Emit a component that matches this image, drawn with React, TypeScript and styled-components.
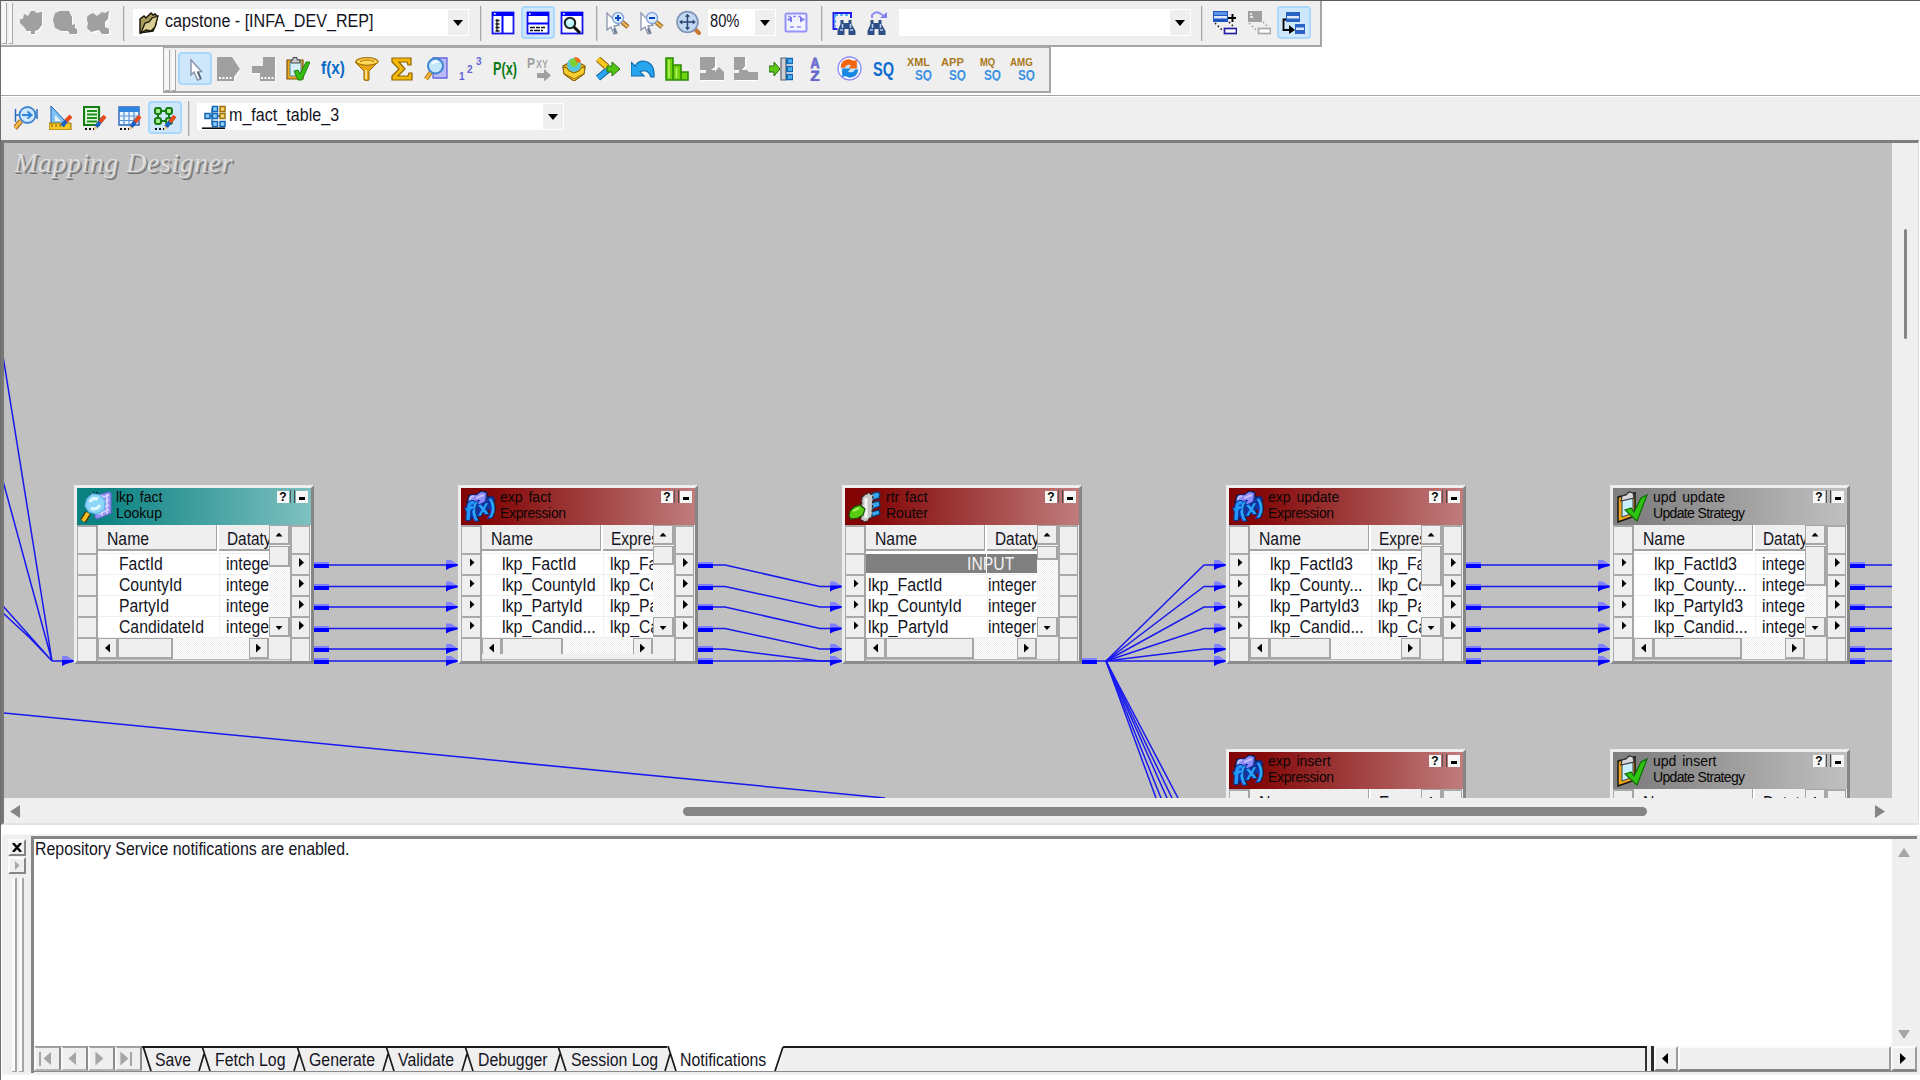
import React from 'react';
import styled, { createGlobalStyle, css } from 'styled-components';

const Global = createGlobalStyle`
  * { box-sizing: border-box; }
  html, body { margin: 0; padding: 0; background: #fff; overflow: hidden; }
  svg { display: block; flex: none; }
`;

const face = '#efefef';
const shade = '#a6a6a6';

const Screen = styled.div`
  width: 1920px;
  height: 1080px;
  display: flex;
  flex-direction: column;
  background: #fff;
  border-left: 1px solid #6e6e6e;
  border-top: 1px solid #5c5c5c;
  font-family: 'Liberation Sans', Arial, sans-serif;
  color: #14141e;
  overflow: hidden;
`;

const Label = styled.span<{ size?: number; squeeze?: number }>`
  display: inline-block;
  font-size: ${p => p.size ?? 17.5}px;
  line-height: 20px;
  white-space: pre;
  transform: scaleX(${p => p.squeeze ?? 0.9});
  transform-origin: 0 50%;
`;

/* ---------- toolbars ---------- */

const StandardBar = styled.div`
  display: flex;
  align-items: flex-start;
  width: 1321px;
  height: 46px;
  background: ${face};
  border-right: 2px solid ${shade};
  border-bottom: 2px solid ${shade};
`;

const BarRow = styled.div`
  display: flex;
  height: 48px;
  padding-left: 162px;
`;

const TransformBar = styled.div`
  display: flex;
  align-items: flex-start;
  width: 888px;
  height: 46px;
  padding-left: 1px;
  background: ${face};
  border: 2px solid ${shade};
  border-left-width: 1px;
  border-top-width: 1px;
`;

const DesignerBar = styled.div`
  display: flex;
  align-items: flex-start;
  height: 45px;
  padding-left: 8px;
  background: ${face};
  border-top: 1px solid ${shade};
  box-shadow: inset 0 1px 0 #fff;
`;

const Grip = styled.div<{ gap: number }>`
  display: flex;
  gap: 2px;
  width: 11px;
  height: 41px;
  margin: 2px 0 0 ${p => p.gap}px;
  &::before,
  &::after {
    content: '';
    width: 4px;
    background: #f7f7f7;
    border-right: 1px solid ${shade};
    border-bottom: 1px solid ${shade};
  }
`;

const Tool = styled.div<{ gap?: number; w?: number; top?: number; on?: boolean }>`
  display: flex;
  align-items: center;
  justify-content: center;
  flex: none;
  width: ${p => p.w ?? 34}px;
  height: 33px;
  margin: ${p => p.top ?? 5}px 0 0 ${p => p.gap ?? 0}px;
  border: 2px solid transparent;
  border-radius: 4px;
  ${p =>
    p.on &&
    css`
      background: #cfe7fb;
      border-color: #a9d8fb;
    `}
`;

const Rule = styled.div<{ gap: number; top?: number }>`
  flex: none;
  width: 2px;
  height: 35px;
  margin: ${p => p.top ?? 5}px 0 0 ${p => p.gap}px;
  background: linear-gradient(90deg, ${shade} 70%, #dcdcdc 70%);
`;

const Combo = styled.div<{ gap: number; w: number; top?: number }>`
  display: flex;
  align-items: center;
  flex: none;
  width: ${p => p.w}px;
  height: 27px;
  margin: ${p => p.top ?? 8}px 0 0 ${p => p.gap}px;
  background: #fff;
`;

const ComboIcon = styled.div<{ gap: number }>`
  margin-left: ${p => p.gap}px;
`;

const ComboText = styled.div<{ pad: number }>`
  flex: 1;
  min-width: 0;
  height: 20px;
  margin-top: -3px;
  padding-left: ${p => p.pad}px;
`;

const ComboButton = styled.div`
  display: flex;
  align-items: center;
  justify-content: center;
  width: 20px;
  height: 25px;
  margin-right: 1px;
  background: ${face};
  &::after {
    content: '';
    border: 5.5px solid transparent;
    border-top: 6px solid #000;
    border-bottom: 0;
  }
`;

/* ---------- glyphs ---------- */

const Ic = ({ children, s = 24 }: { children: React.ReactNode; s?: number }) => (
  <svg width={s} height={s} viewBox="0 0 24 24">
    {children}
  </svg>
);

const BITMAP = "'Liberation Sans', Arial, sans-serif";

const Blob = ({ d }: { d: string }) => (
  <Ic>
    <path d={d} fill="#fff" transform="translate(1.3 1.3)" />
    <path d={d} fill="#a0a0a0" />
  </Ic>
);

const Folder = () => (
  <svg width="22" height="24" viewBox="0 0 22 24">
    <path d="M2 22V8l4-3 2 2 5-5 2 2 2-1 2 2-1 8-3 7z" fill="#a89c5c" stroke="#1a1708" strokeWidth="1.500" />
    <path d="M3 22 7 12l4-1 3-4 6-2-3 11-4 4-5-1z" fill="#d9cf94" stroke="#1a1708" strokeWidth="1.300" />
  </svg>
);

const WinIcon = ({ kind }: { kind: 'nav' | 'out' | 'find' }) => (
  <Ic>
    <rect x="1.5" y="1.5" width="21" height="21" fill="#fff" stroke="#1414f0" strokeWidth="1.8" />
    <rect x="1" y="1" width="22" height="4" fill="#0000ff" />
    <rect x="3" y="2" width="1.6" height="1.6" fill="#fff" />
    {kind === 'nav' && (
      <>
        <path d="M11.5 5v17" stroke="#0000ff" strokeWidth="2" />
        <path d="M6 8v12M4.5 9.500h4M4.500 13h4M4.500 16.500h4M4.500 20h4" stroke="#111" strokeWidth="1.3" />
      </>
    )}
    {kind === 'out' && (
      <>
        <path d="M2 12.500h20" stroke="#0000ff" strokeWidth="2" />
        <path d="M4 16.500h5m1 0h4m1 0h4M4 19.500h3m1 0h6m1 0h2" stroke="#111" strokeWidth="1.5" />
      </>
    )}
    {kind === 'find' && (
      <>
        <circle cx="10" cy="12" r="5.2" fill="#b8f6fa" stroke="#222" strokeWidth="2" />
        <path d="M8 12l3-3" stroke="#fff" strokeWidth="1.500" />
        <path d="m14 16 6 6" stroke="#111" strokeWidth="3" />
      </>
    )}
  </Ic>
);

const ZoomCursor = ({ plus }: { plus?: boolean }) => (
  <Ic>
    <path d="m1 2 0 17 4-3 3 7 3-1-3-7 5-1z" fill="#fff" stroke="#8995ad" strokeWidth="1.3" />
    <path d="m9 17 2 5-2 1-2-5z" fill="#6d7b95" />
    <path d="m16 11 6 5" stroke="#8a5b18" strokeWidth="4.500" />
    <path d="m16 11 6 5" stroke="#e9b254" strokeWidth="2.600" />
    <circle cx="12" cy="7" r="5.500" fill="#dcebfd" stroke="#86a5d8" strokeWidth="1.400" />
    <path d={plus ? 'M9 7h6M12 4v6' : 'M9 7h6'} stroke="#0a49c4" strokeWidth="2" />
  </Ic>
);

const FitZoom = () => (
  <Ic s={25}>
    <path d="m18 18 4 4" stroke="#c8782e" strokeWidth="4" strokeLinecap="round" />
    <circle cx="11" cy="11.500" r="10" fill="#c3d8f3" stroke="#8496b8" strokeWidth="1.700" />
    <path d="M11 5v13M5 11.500h12" stroke="#2b4672" strokeWidth="1.500" />
    <path d="m11 3.500 2.500 3h-5zM11 19.500l2.500-3h-5zM3 11.500l3-2.500v5zM19 11.500l-3-2.500v5z" fill="#2b4672" />
  </Ic>
);

const Extent = () => (
  <Ic>
    <rect x="1.500" y="2.500" width="21" height="18" rx="1.500" fill="#f3f3ff" stroke="#9494f8" strokeWidth="2" />
    <path d="M4 5.500h3m2 0h3m2 0h3M6 16h4m3 0h4" stroke="#8d8df5" strokeWidth="1.600" />
    <path d="M7 6v5M3.500 8.500H8M17 6v5M16 8.500h4.500" stroke="#7474ee" strokeWidth="1.800" />
  </Ic>
);

const Binocs = () => (
  <>
    <path d="M6 9h3v3h5V9h3v4l4 7v4h-7v-6h-4v6H3v-4l3-7z" fill="#2d4f85" />
    <path d="M5.500 19h3M15.500 19h3M8 13v4M16 13v4" stroke="#b8cdee" strokeWidth="1.600" />
  </>
);

const FindMap = () => (
  <Ic>
    <path d="M1.500 1v17h4M1.500 2H19v5" fill="none" stroke="#2020ec" strokeWidth="2" />
    <path d="M3 4h14M3 4v12" stroke="#2ca0f4" strokeWidth="1.500" strokeDasharray="3 2" />
    <g transform="translate(2.500 0)">
      <Binocs />
    </g>
  </Ic>
);

const FindNext = () => (
  <Ic>
    <path d="M6 7V4q4-5 9-1l3 2" fill="none" stroke="#8c8cf4" strokeWidth="2" />
    <path d="M21 1v6h-7z" fill="#8080f2" />
    <g transform="translate(-1.500 0)">
      <Binocs />
    </g>
  </Ic>
);

const LinkBoxes = ({ gray }: { gray?: boolean }) => (
  <Ic>
    {gray ? (
      <>
        <path d="M1 0h14v11H1z" fill="#a0a0a0" />
        <path d="M3 3h2M3 6h3" stroke="#fff" strokeWidth="1.500" />
      </>
    ) : (
      <>
        <path d="M0 0h15v11H0z" fill="#1f55bc" />
        <path d="M1 1h13v3H1z" fill="#5f93ea" />
        <path d="M1 5h13v2.500H1z" fill="#dfe8fa" />
        <path d="M15 7h8M19.500 3v8" stroke="#000" strokeWidth="2" />
      </>
    )}
    <path d="M2 12l8 8M16 11l5 5" stroke={gray ? '#a8a8a8' : '#222'} strokeWidth="1.700" strokeDasharray="1.500 2.500" />
    <rect x="11.500" y="17.500" width="12" height="5" fill="#fff" stroke={gray ? '#a8a8a8' : '#2020a0'} strokeWidth="1.700" />
  </Ic>
);

const Cascade = () => (
  <Ic>
    <path d="M4 1h14v10H4z" fill="#2a62c4" />
    <path d="M5 5h12v2.500H5z" fill="#dbe6fa" />
    <path d="M13 13h10v10H13z" fill="#2a62c4" />
    <path d="M14 16.500h8v2.500h-8z" fill="#dbe6fa" />
    <path d="M4 8.500H1.500V19H8" fill="none" stroke="#000" strokeWidth="1.800" />
    <path d="m7 14 6 5-6 4z" fill="#000" />
  </Ic>
);

const Pointer = () => (
  <Ic>
    <path d="m8 3 0 15 3-3 3.500 8 3-1-3-7 4-.500z" fill="#fff" stroke="#8a95a8" strokeWidth="1.500" />
    <path d="m15 15 3 7" stroke="#5c6678" strokeWidth="1.800" />
  </Ic>
);

const Teeth = ({ left }: { left?: boolean }) => (
  <Ic>
    <g>
      <path d={left ? 'M11 0h12v24H8v-8H0V9h11z' : 'M0 0h15l8 12-6 8v4H0z'} fill="#fff" transform="translate(1 1)" />
      <path d={left ? 'M11 0h12v24H8v-8H0V9h11z' : 'M0 0h15l8 12-6 8v4H0z'} fill="#a0a0a0" />
      <path d={left ? 'M9 21h13' : 'M2 21h14'} stroke="#fff" strokeWidth="2" strokeDasharray="2 1.500" />
    </g>
  </Ic>
);

const Clip = () => (
  <Ic>
    <path d="M1 3h16v19H1z" fill="#f0a818" stroke="#7c5310" strokeWidth="1.200" />
    <path d="M4 5h11v14H4z" fill="#d4f0fc" stroke="#4c8b9a" strokeWidth="1" />
    <path d="M5 6V3h2V.500h4V3h3v3z" fill="#c9cdd4" stroke="#444" strokeWidth="1" />
    <path d="m8 14 4-1 2 4 6-12h4l-8 18h-4z" fill="#35bd10" stroke="#1a7606" strokeWidth=".9" />
  </Ic>
);

const Word = ({ t, fill, size = 18, w = 24, y = 18, x = 0 }: { t: string; fill: string; size?: number; w?: number; y?: number; x?: number }) => (
  <text x={x} y={y} fontFamily={BITMAP} fontWeight="700" fontSize={size} fill={fill} textLength={w} lengthAdjust="spacingAndGlyphs">
    {t}
  </text>
);

const Funnel = () => (
  <Ic>
    <path d="M0 5 9 14v9q3 1 5 0v-9l9-9z" fill="#eaa60c" stroke="#8f6408" strokeWidth="1" />
    <ellipse cx="12" cy="4.500" rx="11" ry="3.800" fill="#ffd95c" stroke="#a8770c" strokeWidth="1.200" />
    <path d="M5 4.500q7-3 14 0" stroke="#c78b0c" strokeWidth="1.600" fill="none" />
    <path d="M11 13v9" stroke="#fff0a8" strokeWidth="1.600" />
  </Ic>
);

const Sigma = () => (
  <Ic>
    <path d="M2 1h19v7h-3l-1-3H9l6 7-7 7h10l1-3h3v7H2v-4l7-7-7-7z" fill="#f4b806" stroke="#8f6408" strokeWidth="1.200" />
  </Ic>
);

const Glass = () => (
  <Ic>
    <path d="M9 1h14v20H9z" fill="#b9b9f8" stroke="#6464dc" strokeWidth="1.300" />
    <path d="m7 15-5 7" stroke="#a86a14" strokeWidth="4.500" />
    <path d="m7 15-5 7" stroke="#f4bb38" strokeWidth="2.500" />
    <circle cx="11.500" cy="9" r="7.500" fill="#c4e6fb" stroke="#3e84d0" strokeWidth="2" />
    <path d="M8 7q2-3 6-2" stroke="#fff" strokeWidth="2" fill="none" />
  </Ic>
);

const Seq = () => (
  <Ic>
    <g fontFamily={BITMAP} fontWeight="700" fill="#6464d4">
      <text x="0" y="23" fontSize="10">1</text>
      <text x="8" y="16" fontSize="10">2</text>
      <text x="17" y="8" fontSize="10">3</text>
    </g>
  </Ic>
);

const Pxy = () => (
  <Ic>
    <Word t="P" fill="#a0a0a0" size={15} w={8} y={11} />
    <Word t="XY" fill="#a8a8a8" size={11} w={12} y={11} x={9} />
    <path d="M10 16h7v-4l7 6.500-7 6V21h-7z" fill="#a0a0a0" />
  </Ic>
);

const Crate = () => (
  <Ic>
    <path d="M1 9 12 3l11 6-1 8-10 7-10-7z" fill="#e4ad0e" stroke="#84600a" strokeWidth="1.200" />
    <circle cx="12" cy="8" r="7" fill="#58c8e0" />
    <path d="M7 4q5-5 10 0l-2 5-5 1z" fill="#7cd232" />
    <path d="M12 0q6 0 7 5l-4 1z" fill="#f26c20" />
    <path d="M1 10l4 1 2 3 5 2 5-2 2-3 4-1-1 7-10 7-10-7z" fill="#f7cf30" stroke="#84600a" strokeWidth="1" />
    <path d="m3 17 9 5 9-5" fill="none" stroke="#9c6f06" />
  </Ic>
);

const Merge = () => (
  <Ic>
    <path d="m2 21 11-9" stroke="#10649e" strokeWidth="6.500" />
    <path d="m2 21 11-9" stroke="#2ba4ee" strokeWidth="4.500" />
    <path d="m2 2 9 8" stroke="#93690a" strokeWidth="6.500" />
    <path d="m2 2 9 8" stroke="#f9c721" strokeWidth="4.500" />
    <path d="M11 9h5V5l8 7-8 7v-4h-5z" fill="#52c414" stroke="#2a7506" />
  </Ic>
);

const Undo = () => (
  <Ic>
    <path d="M0 5v14h13l-4-4q8-4 11 5h3Q24 5 12 4 7 4 4 9z" fill="#28a4ee" stroke="#0c6ab0" strokeWidth="1.200" />
  </Ic>
);

const Bars = () => (
  <Ic>
    <path d="M1 1h7v22H1zM8 8h8v15H8zM16 15h7v8h-7z" fill="#6fd40c" stroke="#2b8c04" strokeWidth="1.600" />
    <path d="M4 3v18M11.500 11v10" stroke="#b8f26a" strokeWidth="1.500" />
  </Ic>
);

const RouterGlyph = () => (
  <Ic>
    <path d="M0 9h5V5l6 7-6 7v-4H0z" fill="#5cc814" stroke="#26700a" />
    <path d="M12 1h5v22h-5z" fill="#ccd0d4" stroke="#5c6468" strokeWidth="1.200" />
    <path d="M17 4h7M17 12h7M17 20h7" stroke="#1568b4" strokeWidth="6.500" />
    <path d="M19 4h4M19 12h4M19 20h4" stroke="#46b0f4" strokeWidth="3.500" />
  </Ic>
);

const Sorter = () => (
  <Ic>
    <g stroke="#6c6cd0" strokeWidth=".8">
      <Word t="A" fill="#7070d4" size={14} w={9} y={10.500} x={7.500} />
      <Word t="Z" fill="#5c5cc4" size={15} w={9} y={23.500} x={7.500} />
    </g>
  </Ic>
);

const Globe = () => (
  <Ic s={25}>
    <circle cx="12" cy="12" r="11" fill="#fff" stroke="#8a8cf4" strokeWidth="1.300" />
    <circle cx="12" cy="12" r="8.800" fill="#c8e2fa" />
    <path d="M3.500 11Q4 3 12 3.200l4 1.500 3-1.200v8.500h-8l2.500-3q-4-2-6 2.500z" fill="#f4650c" />
    <path d="M20.500 13Q19.500 20.800 12 20.800l-4-1.500-3 1.200V12h8l-2.500 3q5 2 7-2z" fill="#1888e4" />
  </Ic>
);

const Sq = ({ top }: { top: string }) => (
  <svg width="26" height="24" viewBox="-1 0 26 24">
    <Word t={top} fill="#a8781c" size={10.500} w={top.length * 7.600} y={8.500} x={top.length === 2 ? 4 : 0} />
    <Word t="SQ" fill="#3a90e4" size={15} w={17} y={23} x={8} />
  </svg>
);

const Pencil = () => (
  <>
    <path d="m13 21 7-9" stroke="#1a60c0" strokeWidth="4" />
    <path d="m17 16 5-6" stroke="#e84a1c" strokeWidth="4" />
    <path d="m11 24 1-4 3 2z" fill="#f0c070" />
    <path d="M2 23h9" stroke="#111" strokeWidth="1.800" strokeDasharray="2 2" />
  </>
);

const Source = () => (
  <Ic>
    <path d="M1.500 3v13M2 9h4M23 3v10" stroke="#2b6cc0" strokeWidth="1.500" />
    <path d="m7 15-6 7" stroke="#9c5d12" strokeWidth="5" />
    <path d="m7 15-6 7" stroke="#f4b850" strokeWidth="3" />
    <circle cx="13.500" cy="9" r="8" fill="#cfe9fb" stroke="#3e84d0" strokeWidth="1.800" />
    <path d="M8 9h8M13.500 5.500 17.500 9l-4 3.500" fill="none" stroke="#2f86dc" strokeWidth="2" />
  </Ic>
);

const Target = () => (
  <Ic>
    <path d="M2 0v18h17z" fill="#7cc4f8" stroke="#2060b4" />
    <path d="M6 9v6h6z" fill="#efefef" />
    <path d="M0 17h22v7H0z" fill="#f6c828" stroke="#94700c" />
    <path d="M3 18v3m4-3v3m4-3v3m4-3v3" stroke="#7a5a08" />
    <path d="m13 20 5-6" stroke="#1a60c0" strokeWidth="4" />
    <path d="m17 15 5-5" stroke="#e84a1c" strokeWidth="4" />
  </Ic>
);

const Sheet = () => (
  <Ic>
    <path d="M1 1h15v18H1z" fill="#e4f8e0" stroke="#167c14" strokeWidth="2.200" />
    <path d="M4 5h10M4 8.500h10M4 12h10M4 15.500h10" stroke="#1d8f1a" strokeWidth="2" />
    <Pencil />
  </Ic>
);

const Grid = () => (
  <Ic>
    <path d="M1 1h20v18H1z" fill="#e8f4ff" stroke="#2b62b8" strokeWidth="1.400" />
    <path d="M1 1h20v5H1z" fill="#2f84e0" />
    <path d="M1 10h20M1 14.500h20M6 6v13M11 6v13M16 6v13" stroke="#5b94d6" strokeWidth="1.200" />
    <Pencil />
  </Ic>
);

const MapGlyph = () => (
  <Ic>
    <path d="M5 5h12M5 15h12M5 5v10M16 5v10" stroke="#167c14" strokeWidth="2" />
    {[[5, 5], [16, 5], [5, 15], [16, 15]].map(([x, y]) => (
      <rect key={`${x}-${y}`} x={x - 3} y={y - 3} width="6" height="6" rx="2" fill="#a8ee90" stroke="#167c14" strokeWidth="2" />
    ))}
    <Pencil />
  </Ic>
);

const MapFile = () => (
  <Ic>
    <path d="M6 11h4M13 4H10v15h3M16 11h2" fill="none" stroke="#1464b4" strokeWidth="1.300" />
    <path d="M3 8.500h5v5H3zM10.500 1.500h5v5h-5zM10.500 8.500h5v5h-5zM10.500 16.500h5v5h-5zM18 16.500h5v5h-5z" fill="#8cd0fa" stroke="#1464b4" strokeWidth="1.500" />
    <path d="M18 1.500h5v5h-5zM18 8.500h5v5h-5z" fill="#f8d468" stroke="#9a700c" strokeWidth="1.500" />
    <path d="M0 23.200h23" stroke="#000" strokeWidth="1.500" />
  </Ic>
);

const CloseMark = () => (
  <svg width="10" height="9" viewBox="0 0 10 9">
    <path d="m1 0 8 9M9 0 1 9" stroke="#000" strokeWidth="2.400" />
  </svg>
);

/* ---------- mapping canvas ---------- */

const CanvasFrame = styled.div`
  display: grid;
  grid-template-columns: 1888px 1fr;
  grid-template-rows: 655px 1fr;
  width: 1918px;
  height: 685px;
  border-left: 3px solid #777;
  border-top: 3px solid #7d7d7d;
  border-right: 1px solid #dedede;
  border-bottom: 2px solid #e3e3e3;
  background: ${face};
`;

const Canvas = styled.div`
  position: relative;
  overflow: hidden;
  background: #c0c0c0;
`;

const Wires = styled.svg`
  position: absolute;
  inset: 0;
`;

const CanvasTitle = styled.div`
  padding: 4px 0 0 10px;
  font: italic 400 28px/32px 'Liberation Serif', 'Times New Roman', serif;
  letter-spacing: 0.5px;
  color: #dedede;
  text-shadow: 1px 1px 0 #a0a0a0, 2px 2px 0 #707070;
  white-space: nowrap;
`;

const Vertical = styled.div`
  padding: 86px 0 0 12px;
  &::after {
    content: '';
    display: block;
    width: 3px;
    height: 110px;
    border-radius: 2px;
    background: #858585;
  }
`;

const Horizontal = styled.div`
  display: flex;
  align-items: center;
  padding: 2px 7px 0 6px;
`;

const Thumb = styled.div`
  width: 964px;
  height: 9px;
  margin: 0 228px 0 663px;
  border-radius: 5px;
  background: #858585;
`;

const Tri = styled.i<{ dir: 'l' | 'r' | 'u' | 'd'; a: number; b: number; tone?: string }>`
  flex: none;
  width: ${p => (p.dir === 'l' || p.dir === 'r' ? p.a : p.b * 2)}px;
  height: ${p => (p.dir === 'l' || p.dir === 'r' ? p.b * 2 : p.a)}px;
  background: ${p => p.tone ?? '#000'};
  clip-path: polygon(
    ${p =>
      ({
        l: '0 50%, 100% 0, 100% 100%',
        r: '0 0, 100% 50%, 0 100%',
        u: '50% 0, 100% 100%, 0 100%',
        d: '0 0, 100% 0, 50% 100%',
      })[p.dir]}
  );
`;

const NodeBox = styled.div<{ x: number; y: number }>`
  position: absolute;
  left: ${p => p.x - 4}px;
  top: ${p => p.y - 143}px;
  width: 240px;
  height: 179px;
  border: 3px solid;
  border-color: #ededed #868686 #8c8c8c #ededed;
  background: ${face};
`;

const NodeHead = styled.div<{ from: string; to: string }>`
  display: flex;
  height: 37px;
  padding: 2px 3px 0 3px;
  background: linear-gradient(90deg, ${p => p.from} 10%, ${p => p.to});
`;

const NodeTitle = styled.div`
  flex: 1;
  padding: 0 0 0 4px;
  font-size: 14px;
  line-height: 16.5px;
  white-space: pre;
  color: #0a0505;
`;

const TitleLine = styled.div<{ w: number }>`
  height: 16px;
  letter-spacing: ${p => p.w}px;
  word-spacing: 2px;
  margin-top: -1px;
  & + & {
    margin-top: 0;
    word-spacing: 0;
  }
`;

const HeadButton = styled.div`
  display: flex;
  align-items: center;
  justify-content: center;
  width: 12px;
  height: 12px;
  margin-top: 1px;
  background: #f6f6f6;
  font: 700 12px/12px 'Liberation Sans', sans-serif;
  color: #000;
`;

const HeadSplit = styled.div`
  width: 6px;
  height: 13px;
  margin: 0 0 0 1px;
  border-left: 1px solid #555;
  &::after {
    content: '';
    display: block;
    width: 1px;
    height: 13px;
    margin-left: 3px;
    background: #444;
  }
`;

const Minus = styled.i`
  width: 6px;
  height: 3px;
  margin-top: 3px;
  background: #000;
`;

const NodeBody = styled.div`
  display: grid;
  grid-template-columns: 21px 192px 21px;
  height: 136px;
`;

const Ports = styled.div<{ right?: boolean }>`
  display: grid;
  grid-template-rows: 28px repeat(4, 21px) 24px;
  margin-right: ${p => (p.right ? 1 : 0)}px;
  border-left: ${p => (p.right ? 2 : 1)}px solid #a9a9a9;
  border-right: ${p => (p.right ? 1 : 2)}px solid #a4a4a4;
`;

const Port = styled.div`
  display: flex;
  align-items: center;
  justify-content: center;
  padding: 0 0 4px 2px;
  border-top: 2px solid #a9a9a9;
`;

const Middle = styled.div`
  display: grid;
  grid-template-columns: 171px 21px;
  grid-template-rows: 112px 22px 2px;
  overflow: hidden;
`;

const List = styled.div`
  overflow: hidden;
  background: #fff;
`;

const HeadRow = styled.div`
  display: grid;
  grid-template-columns: 119px 52px;
  gap: 2px;
  height: 24px;
  margin-bottom: 4px;
`;

const HeadCell = styled.div`
  padding: 4px 0 0 8px;
  background: ${face};
  border-bottom: 2px solid #a4a4a4;
  &:first-child {
    padding-left: 9px;
    border-right: 1px solid #a4a4a4;
  }
`;

const Row = styled.div`
  display: grid;
  grid-template-columns: 121px 50px;
  height: 21px;
  border-top: 1px solid #efefef;
`;

const Cell = styled.div<{ pad: number }>`
  height: 20px;
  padding-left: ${p => p.pad}px;
  border-left: 1px solid #f0f0f0;
  &:first-child {
    border-left: 0;
  }
`;

const GroupRow = styled.div`
  height: 21px;
  padding-left: 101px;
  border-top: 1px solid #fff;
  border-bottom: 1px solid #fff;
  background: linear-gradient(90deg, #808080 120px, #fff 120px, #fff 121px, #808080 121px);
  color: #f2f2f2;
`;

const dither = css`
  background: repeating-conic-gradient(#fff 0 25%, #ededed 0 50%) 0 0 / 2px 2px;
`;

const VBar = styled.div`
  display: flex;
  flex-direction: column;
  justify-content: space-between;
  ${dither}
`;

const Push = styled.div<{ w: number; h: number; gap?: number; end?: boolean; drop?: number }>`
  display: flex;
  align-items: center;
  justify-content: center;
  flex: none;
  width: ${p => p.w}px;
  height: ${p => p.h}px;
  margin-top: ${p => p.gap ?? 0}px;
  padding-top: ${p => p.drop ?? 0}px;
  ${p => p.end && 'margin-left: auto;'}
  background: ${face};
  border: 2px solid #a6a6a6;
  border-width: 1px 2px 2px 1px;
`;

const HBar = styled.div<{ cut?: boolean }>`
  display: flex;
  height: ${p => (p.cut ? 16 : 21)}px;
  margin-top: 1px;
  overflow: hidden;
  ${dither}
`;

const Corner = styled.div`
  background: ${face};
`;

const Foot = styled.div`
  grid-column: 1 / -1;
  background: #dedee2;
  border-top: 1px solid #b8b8bc;
`;

type NodeSpec = {
  x: number;
  y: number;
  name: string;
  kind: 'Lookup' | 'Expression' | 'Router' | 'Update Strategy';
  second: string;
  rows: [string, string][];
  vThumb: number;
  hThumb: number;
  ins: number[];
  outs: number[];
};

const palette = {
  Lookup: ['#0b8282', '#7fc0c0'],
  Expression: ['#820404', '#c07c7c'],
  Router: ['#820404', '#c07c7c'],
  'Update Strategy': ['#808080', '#c0c0c0'],
};

const keys3: [string, string][] = [
  ['lkp_FactId3', ''],
  ['lkp_County...', ''],
  ['lkp_PartyId3', ''],
  ['lkp_Candid...', ''],
];
const exprs = ['lkp_FactId', 'lkp_County', 'lkp_PartyId', 'lkp_Candid'];

const withSecond = (rows: [string, string][], values: string[]): [string, string][] =>
  rows.map(([a], i) => [a, values[i]]);
const ints = ['integer', 'integer', 'integer', 'integer'];
const all = [1, 2, 3, 4];

const nodes: NodeSpec[] = [
  { x: 74, y: 485, name: 'lkp fact', kind: 'Lookup', second: 'Datatype', vThumb: 21, hThumb: 55, ins: [], outs: all,
    rows: [['FactId', 'integer'], ['CountyId', 'integer'], ['PartyId', 'integer'], ['CandidateId', 'integer']] },
  { x: 458, y: 485, name: 'exp fact', kind: 'Expression', second: 'Expression', vThumb: 19, hThumb: 61, ins: all, outs: all,
    rows: withSecond([['lkp_FactId', ''], ['lkp_CountyId', ''], ['lkp_PartyId', ''], ['lkp_Candid...', '']], exprs) },
  { x: 842, y: 485, name: 'rtr fact', kind: 'Router', second: 'Datatype', vThumb: 14, hThumb: 88, ins: [2, 3, 4], outs: [],
    rows: [['lkp_FactId', 'integer'], ['lkp_CountyId', 'integer'], ['lkp_PartyId', 'integer']] },
  { x: 1226, y: 485, name: 'exp update', kind: 'Expression', second: 'Expression', vThumb: 40, hThumb: 61, ins: all, outs: all,
    rows: withSecond(keys3, exprs) },
  { x: 1610, y: 485, name: 'upd update', kind: 'Update Strategy', second: 'Datatype', vThumb: 40, hThumb: 88, ins: all, outs: all,
    rows: withSecond(keys3, ints) },
  { x: 1226, y: 749, name: 'exp insert', kind: 'Expression', second: 'Expression', vThumb: 40, hThumb: 61, ins: all, outs: all,
    rows: withSecond(keys3, exprs) },
  { x: 1610, y: 749, name: 'upd insert', kind: 'Update Strategy', second: 'Datatype', vThumb: 40, hThumb: 88, ins: all, outs: all,
    rows: withSecond(keys3, ints) },
];

const NodeIcon = ({ kind }: { kind: NodeSpec['kind'] }) => {
  if (kind === 'Lookup')
    return (
      <svg width="32" height="33" viewBox="0 0 32 33">
        <path d="m10 5 4-3 5 1v3" fill="none" stroke="#0a3c44" strokeWidth="1.600" strokeDasharray="2 1.500" />
        <path d="m15 6 14-4 2 1v20l-14 6-2-2z" fill="#9490f0" stroke="#6a68d0" strokeWidth="1" />
        <path d="m18 9 11-4M18 14l11-4M18 19l11-4M18 24l11-4M22 5v21M27 4v20" stroke="#d8d6ff" strokeWidth="1.600" />
        <path d="m8 23-5 8" stroke="#4a3206" strokeWidth="6.500" />
        <path d="m8 23-5 8" stroke="#f7be22" strokeWidth="4" />
        <path d="m7 9 5-5 8 1 5 6-1 9-7 4-8-2-4-6z" fill="#8ed6f8" stroke="#62b4e8" strokeWidth="1.200" />
        <path d="M10 12q2-5 8-3M11 18q5 3 9-3" stroke="#e4f8ff" strokeWidth="3" fill="none" />
      </svg>
    );
  if (kind === 'Expression')
    return (
      <svg width="32" height="33" viewBox="0 0 32 33">
        <path d="m3 12 2-7 8-1 4-3 6 1v5l6-1 2 4-4 9-14 8-8 2z" fill="#16389c" stroke="#081640" strokeWidth="1" strokeDasharray="3 1.500" />
        <path d="m4 12 2-6 7-1 4-3 5 1-1 8-5 3-11 4z" fill="#8c8af8" />
        <path d="M6 10q0-4 4-4M12 8l8-3" stroke="#c0beff" strokeWidth="2" fill="none" />
        <text x="7" y="25" fontFamily={BITMAP} fontStyle="italic" fontWeight="700" fontSize="20" fill="#2aa6fc" stroke="#0a2f94" strokeWidth="2" paintOrder="stroke" textLength="24" lengthAdjust="spacingAndGlyphs" transform="rotate(-12 18 18)">
          (x)
        </text>
        <path d="M10 13q-5-1-5 4l-1 14M1 20l8-3" stroke="#0a2f94" strokeWidth="5.500" fill="none" />
        <path d="M10 13q-5-1-5 4l-1 13M2 20l7-3" stroke="#2196f6" strokeWidth="3.500" fill="none" />
      </svg>
    );
  if (kind === 'Router')
    return (
      <svg width="34" height="33" viewBox="0 0 34 33">
        <path d="m19 5 11-3 2 2-1 4-10 3zM20 14l11-3 1 5-11 4zM20 23l11-3 1 4-11 4z" fill="#38a8f2" stroke="#0c3c70" strokeWidth="1.200" />
        <path d="m14 7 6-4 5 2-1 21-6 6-5-2z" fill="#c6c8c8" stroke="#2a2a2a" strokeWidth="1.200" strokeDasharray="3 1.500" />
        <path d="m18 8v20" stroke="#f4f4f4" strokeWidth="3" />
        <path d="m2 21 4-4 6-2 5 4-2 6-5 3-7 1-2-3z" fill="#58cc12" stroke="#17500a" strokeWidth="1.200" />
        <path d="m5 21 6-3" stroke="#a8f25a" strokeWidth="2" />
      </svg>
    );
  return (
    <svg width="33" height="33" viewBox="0 0 33 33">
      <path d="m2 7 17-4v23L2 32z" fill="#f0a41c" stroke="#111" strokeWidth="1.400" />
      <path d="m6 9 11-3v17L6 27z" fill="#c8f0fc" stroke="#345" strokeWidth="1" />
      <path d="m5 11 1-5 4-1 3-3 4 1 1 5z" fill="#d8d8dc" stroke="#333" strokeWidth="1.200" />
      <path d="m9 20 6-2 3 4 7-14 6-3-10 26z" fill="#2fc412" stroke="#0f6c04" strokeWidth="1.200" />
    </svg>
  );
};

const titleSpacing: Record<string, number> = {
  Lookup: 0,
  Expression: -0.35,
  Router: 0,
  'Update Strategy': -0.65,
};

const PortColumn = ({ open, right }: { open: number[]; right?: boolean }) => (
  <Ports right={right}>
    {[0, 1, 2, 3, 4, 5].map(i => (
      <Port key={i}>{open.includes(i) && <Tri dir="r" a={5} b={4.500} />}</Port>
    ))}
  </Ports>
);

const MapNode = ({ n }: { n: NodeSpec }) => {
  const router = n.kind === 'Router';
  const plain = n.kind === 'Lookup';
  return (
    <NodeBox x={n.x} y={n.y}>
      <NodeHead from={palette[n.kind][0]} to={palette[n.kind][1]}>
        <NodeIcon kind={n.kind} />
        <NodeTitle>
          <TitleLine w={0}>{n.name}</TitleLine>
          <TitleLine w={titleSpacing[n.kind]}>{n.kind}</TitleLine>
        </NodeTitle>
        <HeadButton>?</HeadButton>
        <HeadSplit />
        <HeadButton>
          <Minus />
        </HeadButton>
      </NodeHead>
      <NodeBody>
        <PortColumn open={n.ins} />
        <Middle>
          <List>
            <HeadRow>
              <HeadCell><Label>Name</Label></HeadCell>
              <HeadCell><Label squeeze={0.88}>{n.second}</Label></HeadCell>
            </HeadRow>
            {router && <GroupRow><Label>INPUT</Label></GroupRow>}
            {n.rows.map(([a, b]) => (
              <Row key={a}>
                <Cell pad={router ? 1.5 : plain ? 21 : 19.5}><Label squeeze={plain ? 0.9 : 0.918}>{a}</Label></Cell>
                <Cell pad={router ? 0 : 6}><Label>{b}</Label></Cell>
              </Row>
            ))}
          </List>
          <VBar>
            <div>
              <Push w={21} h={20}><Tri dir="u" a={4} b={3.500} /></Push>
              <Push w={21} h={n.vThumb} gap={1} />
            </div>
            <Push w={21} h={20} drop={3}><Tri dir="d" a={4} b={3.500} /></Push>
          </VBar>
          <HBar cut={n.name === 'exp fact'}>
            <Push w={20} h={21}><Tri dir="l" a={5} b={4.500} /></Push>
            <Push w={n.hThumb} h={21} />
            <Push w={20} h={21} end><Tri dir="r" a={5} b={4.500} /></Push>
          </HBar>
          <Corner />
          <Foot />
        </Middle>
        <PortColumn open={n.outs} right />
      </NodeBody>
    </NodeBox>
  );
};

const lanes = [565, 586.5, 607, 628.5, 649, 661];

const Stub = ({ x, y }: { x: number; y: number }) => (
  <g shapeRendering="crispEdges">
    <rect x={x} y={y - 3} width="15" height="3" fill="#8080ff" />
    <rect x={x} y={y - 1} width="15" height="4" fill="#0000ff" />
  </g>
);

const Head = ({ x, y }: { x: number; y: number }) => (
  <g>
    <path d={`M${x - 12} ${y - 5}h5l6 4v1h-11z`} fill="#8080ff" />
    <path d={`M${x - 12} ${y - 1}H${x - 1}v2l-7 2-4 2z`} fill="#0000ff" />
  </g>
);

const Connectors = () => (
  <Wires width="1888" height="655" viewBox="4 143 1888 655">
    <g fill="none" stroke="#1818f0" strokeWidth="1.500">
      <path d="M3 356 52 661M3 481 52 661M3 606 52 661M3 613 30 638 52 661M52 661H74" />
      <path d="M4 713 885 798" />
      {lanes.map(y => (
        <path key={y} d={`M314 ${y}H458M1466 ${y}H1610M1850 ${y}H1892`} />
      ))}
      {lanes.map((y, i) => (
        <path key={y} d={`M698 ${y}H725L820 ${lanes[Math.min(i + 1, 5)]}H842`} />
      ))}
      <path d="M1082 661H1106" />
      {lanes.map(y => (
        <path key={y} d={`M1106 661 1204 ${y}H1226`} />
      ))}
      {[1156, 1161, 1167, 1172, 1178].map(x => (
        <path key={x} d={`M1106 661 ${x} 798`} />
      ))}
    </g>
    {lanes.map(y => (
      <g key={y}>
        {[314, 698, 1466, 1850].map(x => <Stub key={x} x={x} y={y} />)}
        {[458, 1226, 1610].map(x => <Head key={x} x={x} y={y} />)}
        {y > 570 && <Head x={842} y={y} />}
      </g>
    ))}
    <Stub x={1082} y={661} />
    <Head x={74} y={661} />
  </Wires>
);

/* ---------- output window ---------- */

const Output = styled.div`
  display: flex;
  width: 1918px;
  height: 241px;
  margin: 9px 0 0 1px;
  background: ${face};
  border-top: 1px solid #f6f6f6;
  border-bottom: 1px solid #f4f4f4;
`;

const Side = styled.div`
  width: 29px;
  padding: 4px 0 0 6px;
`;

const SideButton = styled.div`
  display: flex;
  align-items: center;
  justify-content: center;
  width: 18px;
  height: 17px;
  margin-bottom: 1px;
  border: 2px solid;
  border-color: #fcfcfc #858585 #858585 #fcfcfc;
`;

const SideGrip = styled.div`
  display: flex;
  gap: 2px;
  width: 12px;
  height: 194px;
  margin: 4px 0 0 4px;
  &::before,
  &::after {
    content: '';
    flex: 1;
    background: #fafafa;
    border-right: 2px solid ${shade};
    border-bottom: 1px solid ${shade};
  }
`;

const Pane = styled.div`
  display: flex;
  flex-direction: column;
  width: 1886px;
  height: 237px;
  margin-top: 1px;
  border-top: 3px solid #858585;
  border-left: 3px solid #858585;
`;

const PaneBody = styled.div`
  display: flex;
  justify-content: space-between;
  height: 207px;
  background: #fff;
`;

const Message = styled.div`
  padding: 0 0 0 1px;
`;

const PaneScroll = styled.div`
  display: flex;
  flex-direction: column;
  justify-content: space-between;
  align-items: center;
  width: 25px;
  padding: 9px 1px 7px 0;
  background: ${face};
`;

const Strip = styled.div`
  display: flex;
  height: 26px;
  border-bottom: 1px solid #8a8a8a;
  background: ${face};
`;

const NavButton = styled.div<{ side?: 'l' | 'r' }>`
  display: flex;
  align-items: center;
  justify-content: center;
  gap: 2px;
  width: 27px;
  height: 25px;
  padding-right: 4px;
  border: 2px solid;
  border-color: #a0a0a0 #8c8c8c #b4b4b4 #fafafa;
  &::before,
  &::after {
    width: 2px;
    height: 14px;
    background: ${shade};
  }
  ${p => p.side === 'l' && `&::before { content: ''; }`}
  ${p => p.side === 'r' && `&::after { content: ''; }`}
`;

const Tabs = styled.div`
  position: relative;
  display: flex;
  width: 1507px;
  border-right: 2px solid #333;
`;

const TabLines = styled.svg`
  position: absolute;
  left: 0;
  top: 0;
`;

const Tab = styled.div<{ w: number }>`
  position: relative;
  flex: none;
  width: ${p => p.w}px;
  padding-top: 4px;
`;

const TailScroll = styled.div`
  display: flex;
  margin-left: 4px;
  border-left: 3px solid #2c2c2c;
`;

const Raised = styled.div<{ w: number }>`
  display: flex;
  align-items: center;
  justify-content: center;
  width: ${p => p.w}px;
  height: 25px;
  padding-right: 2px;
  border: 2px solid;
  border-color: #fbfbfb #9c9c9c #858585 #fbfbfb;
`;

const tabs: [string, number][] = [
  ['Save', 60],
  ['Fetch Log', 94],
  ['Generate', 89],
  ['Validate', 80],
  ['Debugger', 93],
  ['Session Log', 109],
  ['Notifications', 100],
];
const joints = [61, 156, 245, 324, 417, 527];

const TabStrip = () => (
  <Tabs>
    <TabLines width="1505" height="25" viewBox="0 0 1505 25">
      <path d="M527 0 535 25H635L643 0z" fill="#fff" />
      <g fill="none" stroke="#1c1c1c" strokeWidth="2">
        <path d="M0 1H525M641 1H1505" />
        <path d="M1 0 9 25M633 25 641 1" strokeWidth="1.800" />
        {joints.map(x => (
          <path key={x} d={`M${x - 4} 25 ${x + 1} 8M${x - 1} 0 ${x + 7} 25`} strokeWidth="1.700" />
        ))}
      </g>
    </TabLines>
    <Tab w={13} />
    {tabs.map(([t, w]) => (
      <Tab key={t} w={w}><Label squeeze={0.905}>{t}</Label></Tab>
    ))}
  </Tabs>
);

const transforms: React.ReactNode[] = [
  <Pointer />, <Teeth />, <Teeth left />, <Clip />,
  <Ic><Word t="f(x)" fill="#0c6cc8" size={18} y={17} /></Ic>,
  <Funnel />, <Sigma />, <Glass />, <Seq />,
  <Ic><Word t="P(x)" fill="#0e7a14" size={18} y={18} /></Ic>,
  <Pxy />, <Crate />, <Merge />, <Undo />, <Bars />,
  <Blob d="M0 0h15v10l-4 3h4v2l4-5 5 5v8H0v-7h6v-3H0z" />,
  <Blob d="M0 0h11v9l-3 4h5l2 2h9v8H0v-7h5v-3H0z" />,
  <RouterGlyph />, <Sorter />, <Globe />,
  <Ic><Word t="SQ" fill="#0c6cd0" size={20} w={21} y={19} x={1} /></Ic>,
  <Sq top="XML" />, <Sq top="APP" />, <Sq top="MQ" />, <Sq top="AMG" />,
];

export default function App() {
  return (
    <>
      <Global />
      <Screen>
        <StandardBar>
          <Grip gap={1} />
          <Tool gap={1}><Blob d="M5 3 9 5l3-5h4l1 2 6-1v13l-4 5-3 1v3h-4v-3H8l-3-4-4-4V8h3z" /></Tool>
          <Tool><Blob d="M2 2 7 0h9l3 6v8l3-1v4l2 1v5h-7l-2-3H8l-6-3-2-8z" /></Tool>
          <Tool><Blob d="M2 4 6 2l4 3 5-4 3 1 4-2-1 8-3 3v5l4 2v5h-7l-3-4-8 2-4-4 1-5-2-5z" /></Tool>
          <Rule gap={7} />
          <Combo gap={8} w={336}>
            <ComboIcon gap={5}><Folder /></ComboIcon>
            <ComboText pad={5}><Label squeeze={0.92}>capstone - [INFA_DEV_REP]</Label></ComboText>
            <ComboButton />
          </Combo>
          <Rule gap={11} />
          <Tool gap={4}><WinIcon kind="nav" /></Tool>
          <Tool gap={1} on><WinIcon kind="out" /></Tool>
          <Tool><WinIcon kind="find" /></Tool>
          <Rule gap={7} />
          <Tool gap={3}><ZoomCursor plus /></Tool>
          <Tool><ZoomCursor /></Tool>
          <Tool gap={2}><FitZoom /></Tool>
          <Combo gap={3} w={68}>
            <ComboText pad={2}><Label squeeze={0.84}>80%</Label></ComboText>
            <ComboButton />
          </Combo>
          <Tool gap={3}><Extent /></Tool>
          <Rule gap={8} />
          <Tool gap={4}><FindMap /></Tool>
          <Tool><FindNext /></Tool>
          <Combo gap={4} w={292}>
            <ComboText pad={2} />
            <ComboButton />
          </Combo>
          <Rule gap={10} />
          <Tool gap={5}><LinkBoxes /></Tool>
          <Tool><LinkBoxes gray /></Tool>
          <Tool gap={1} on><Cascade /></Tool>
        </StandardBar>

        <BarRow>
          <TransformBar>
            <Grip gap={0} />
            {transforms.map((icon, i) => (
              <Tool key={i} top={4} gap={i ? 0 : 2} w={i ? 34.48 : 34} on={i === 0}>{icon}</Tool>
            ))}
          </TransformBar>
        </BarRow>

        <DesignerBar>
          <Tool><Source /></Tool>
          <Tool gap={1}><Target /></Tool>
          <Tool><Sheet /></Tool>
          <Tool gap={1}><Grid /></Tool>
          <Tool gap={1} on><MapGlyph /></Tool>
          <Rule gap={6} />
          <Combo gap={7} w={367} top={7}>
            <ComboIcon gap={5}><MapFile /></ComboIcon>
            <ComboText pad={3}><Label squeeze={0.92}>m_fact_table_3</Label></ComboText>
            <ComboButton />
          </Combo>
        </DesignerBar>

        <CanvasFrame>
          <Canvas>
            <CanvasTitle>Mapping Designer</CanvasTitle>
            <Connectors />
            {nodes.map(n => <MapNode key={n.name} n={n} />)}
          </Canvas>
          <Vertical />
          <Horizontal>
            <Tri dir="l" a={10} b={6.500} tone="#858585" />
            <Thumb />
            <Tri dir="r" a={10} b={6.500} tone="#858585" />
          </Horizontal>
        </CanvasFrame>

        <Output>
          <Side>
            <SideButton><CloseMark /></SideButton>
            <SideButton><Tri dir="r" a={5} b={5} tone={shade} /></SideButton>
            <SideGrip />
          </Side>
          <Pane>
            <PaneBody>
              <Message><Label squeeze={0.908}>Repository Service notifications are enabled.</Label></Message>
              <PaneScroll>
                <Tri dir="u" a={9} b={6} tone={shade} />
                <Tri dir="d" a={9} b={6} tone={shade} />
              </PaneScroll>
            </PaneBody>
            <Strip>
              <NavButton side="l"><Tri dir="l" a={8} b={7} tone={shade} /></NavButton>
              <NavButton><Tri dir="l" a={8} b={7} tone={shade} /></NavButton>
              <NavButton><Tri dir="r" a={8} b={7} tone={shade} /></NavButton>
              <NavButton side="r"><Tri dir="r" a={8} b={7} tone={shade} /></NavButton>
              <TabStrip />
              <TailScroll>
                <Raised w={24}><Tri dir="l" a={6} b={5.500} /></Raised>
                <Raised w={213} />
                <Raised w={26}><Tri dir="r" a={6} b={5.500} /></Raised>
              </TailScroll>
            </Strip>
          </Pane>
        </Output>
      </Screen>
    </>
  );
}
